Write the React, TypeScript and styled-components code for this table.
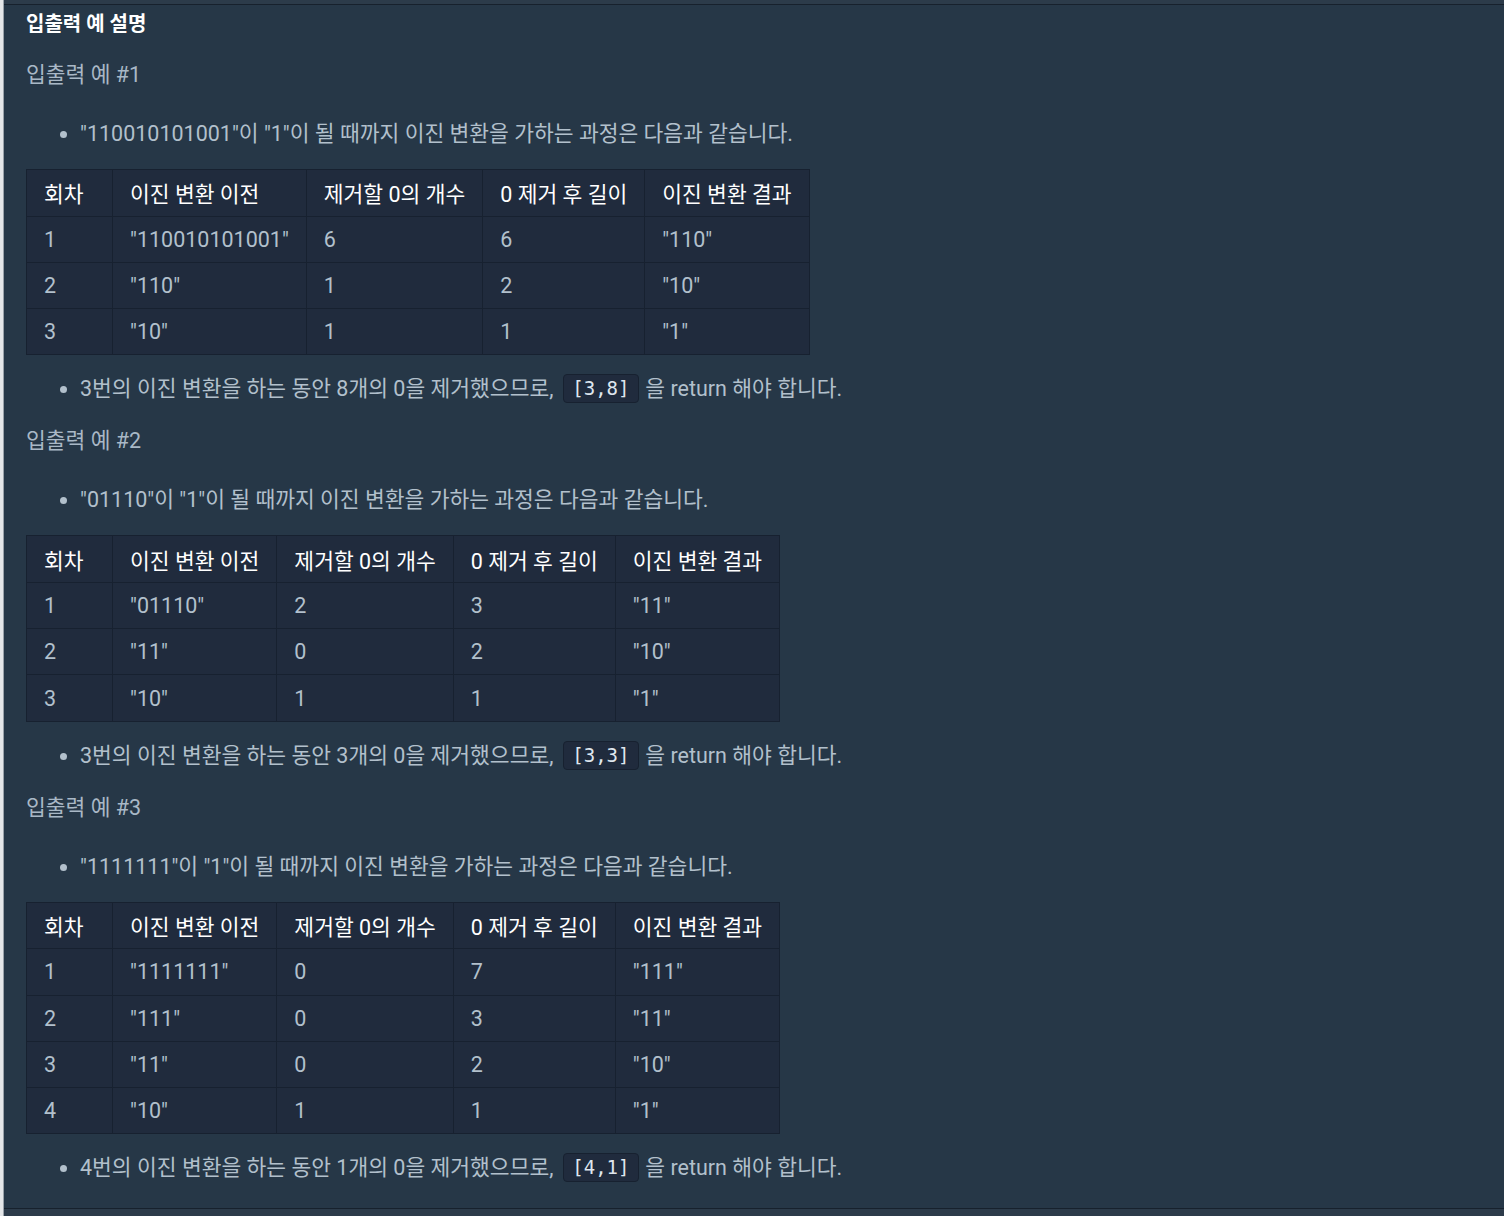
import React from "react";
import styled, { createGlobalStyle } from "styled-components";

const GlobalStyle = createGlobalStyle`
  html, body {
    margin: 0;
    padding: 0;
    background: #263747;
  }
  body {
    font-family: Roboto, "Noto Sans CJK KR", sans-serif;
  }
`;

const Page = styled.div`
  display: flex;
  width: 1504px;
  height: 1216px;
  overflow: hidden;
`;

const SideStrip = styled.div`
  width: 3px;
  background: #e4e6e8;
  border-right: 1px solid #9aa2aa;
  flex-shrink: 0;
`;

const Panel = styled.div`
  flex: 1;
  display: flex;
  flex-direction: column;
  background: #263747;
`;

const TopEdge = styled.div`
  height: 4px;
  background: #2c3b4a;
  border-bottom: 1px solid #17212d;
`;

const BottomEdge = styled.div`
  height: 7px;
  background: #2c3b4a;
  border-top: 1px solid #17212d;
`;

const Content = styled.div`
  flex: 1;
  padding: 0 22px;
  color: #b2c0cc;
`;

const Title = styled.h4`
  margin: 0;
  padding-top: 5px;
  font-size: 20px;
  line-height: 28px;
  font-weight: 700;
  color: #ffffff;
`;

const SubTitle = styled.h5<{ first?: boolean }>`
  margin: ${p => (p.first ? "21px" : "20px")} 0 0 0;
  font-size: 21.5px;
  line-height: 32px;
  font-weight: 400;
  color: #a9b8c6;
`;

const BulletList = styled.ul<{ top: number }>`
  list-style: none;
  margin: ${p => p.top}px 0 0 0;
  padding: 0 0 0 54px;
`;

const Bullet = styled.li`
  position: relative;
  font-size: 21.5px;
  line-height: 32px;
  color: #b2c0cc;
  white-space: nowrap;

  &::before {
    content: "";
    position: absolute;
    left: -20px;
    top: 13px;
    width: 7px;
    height: 7px;
    border-radius: 50%;
    background: #b2c0cc;
  }
`;

const Code = styled.code`
  display: inline-block;
  font-family: "DejaVu Sans Mono", "Liberation Mono", monospace;
  font-size: 19px;
  line-height: 27px;
  padding: 0 8.5px;
  margin: 0 1px 0 4px;
  background: #202b3d;
  border: 1px solid #172130;
  border-radius: 4px;
  color: #dfe6ee;
  vertical-align: 1px;
`;

const Table = styled.table`
  margin-top: 19px;
  border-collapse: collapse;
  background: #202b3d;
  border: 1px solid #172130;
`;

const HeadCell = styled.th<{ first?: boolean }>`
  height: 45.5px;
  padding: 0 17px;
  text-align: left;
  font-size: 21.5px;
  font-weight: 400;
  color: #ffffff;
  white-space: nowrap;
  border: 1px solid #172130;
  min-width: ${p => (p.first ? "51px" : "0")};
`;

const Cell = styled.td`
  height: 45.3px;
  padding: 0 17px;
  font-size: 21.5px;
  color: #b2c0cc;
  white-space: nowrap;
  border: 1px solid #172130;
`;

const headers = ["회차", "이진 변환 이전", "제거할 0의 개수", "0 제거 후 길이", "이진 변환 결과"];

type Example = {
  input: string;
  rows: string[][];
  steps: number;
  zeros: number;
  result: string;
};

const examples: Example[] = [
  {
    input: "110010101001",
    rows: [
      ["1", '"110010101001"', "6", "6", '"110"'],
      ["2", '"110"', "1", "2", '"10"'],
      ["3", '"10"', "1", "1", '"1"'],
    ],
    steps: 3,
    zeros: 8,
    result: "[3,8]",
  },
  {
    input: "01110",
    rows: [
      ["1", '"01110"', "2", "3", '"11"'],
      ["2", '"11"', "0", "2", '"10"'],
      ["3", '"10"', "1", "1", '"1"'],
    ],
    steps: 3,
    zeros: 3,
    result: "[3,3]",
  },
  {
    input: "1111111",
    rows: [
      ["1", '"1111111"', "0", "7", '"111"'],
      ["2", '"111"', "0", "3", '"11"'],
      ["3", '"11"', "0", "2", '"10"'],
      ["4", '"10"', "1", "1", '"1"'],
    ],
    steps: 4,
    zeros: 1,
    result: "[4,1]",
  },
];

const App: React.FC = () => {
  return (
    <>
      <GlobalStyle />
      <Page>
        <SideStrip />
        <Panel>
          <TopEdge />
          <Content>
            <Title>입출력 예 설명</Title>
            {examples.map((ex, i) => (
              <React.Fragment key={i}>
                <SubTitle first={i === 0}>입출력 예 #{i + 1}</SubTitle>
                <BulletList top={27}>
                  <Bullet>
                    "{ex.input}"이 "1"이 될 때까지 이진 변환을 가하는 과정은 다음과 같습니다.
                  </Bullet>
                </BulletList>
                <Table>
                  <thead>
                    <tr>
                      {headers.map((h, j) => (
                        <HeadCell key={h} first={j === 0}>{h}</HeadCell>
                      ))}
                    </tr>
                  </thead>
                  <tbody>
                    {ex.rows.map((row, r) => (
                      <tr key={r}>
                        {row.map((c, k) => (
                          <Cell key={k}>{c}</Cell>
                        ))}
                      </tr>
                    ))}
                  </tbody>
                </Table>
                <BulletList top={18}>
                  <Bullet>
                    {ex.steps}번의 이진 변환을 하는 동안 {ex.zeros}개의 0을 제거했으므로,{" "}
                    <Code>{ex.result}</Code> 을 return 해야 합니다.
                  </Bullet>
                </BulletList>
              </React.Fragment>
            ))}
          </Content>
          <BottomEdge />
        </Panel>
      </Page>
    </>
  );
};

export default App;
